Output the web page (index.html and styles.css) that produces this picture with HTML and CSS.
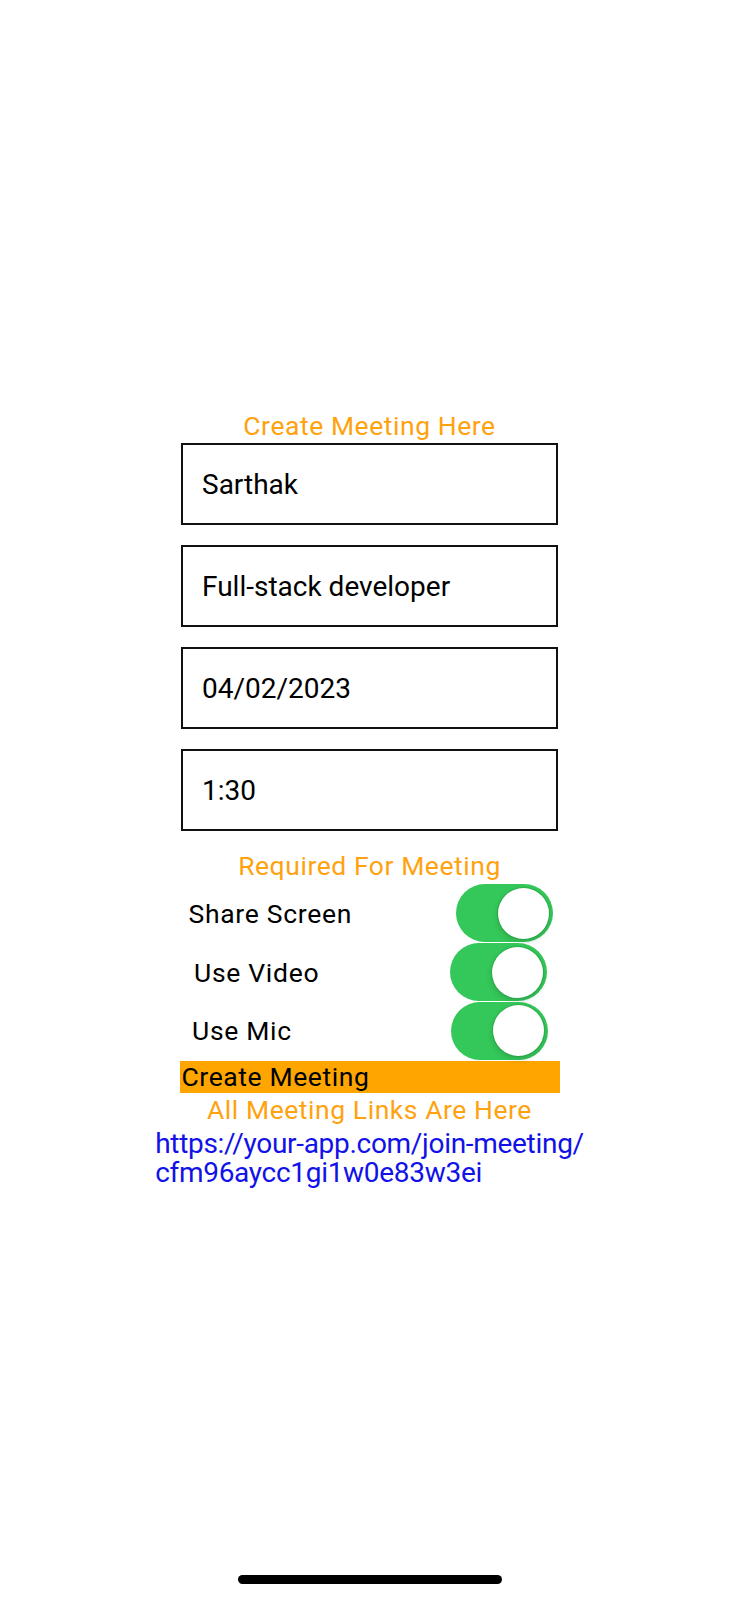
FILE: index.html
```html
<!DOCTYPE html>
<html>
<head>
<meta charset="utf-8">
<link rel="stylesheet" href="styles.css">
</head>
<body>
<div class="screen">
  <div class="content">
    <div class="heading title">Create Meeting Here</div>
    <div class="fields">
      <div class="field">Sarthak</div>
      <div class="field">Full-stack developer</div>
      <div class="field">04/02/2023</div>
      <div class="field">1:30</div>
    </div>
    <div class="heading required">Required For Meeting</div>
    <div class="switches">
      <div class="switch-row row-share">
        <span class="label">Share Screen</span>
        <span class="toggle"><span class="knob"></span></span>
      </div>
      <div class="switch-row row-video">
        <span class="label">Use Video</span>
        <span class="toggle"><span class="knob"></span></span>
      </div>
      <div class="switch-row row-mic">
        <span class="label">Use Mic</span>
        <span class="toggle"><span class="knob"></span></span>
      </div>
    </div>
    <div class="create-btn">Create Meeting</div>
    <div class="heading links-title">All Meeting Links Are Here</div>
    <div class="link">https://your-app.com/join-meeting/<br>cfm96aycc1gi1w0e83w3ei</div>
  </div>
  <div class="home-indicator"></div>
</div>
</body>
</html>
```
FILE: styles.css
```css
* { box-sizing: border-box; }
html, body { margin: 0; padding: 0; background: #fff; }
body { font-family: Roboto, "Noto Sans", sans-serif; }
.screen {
  position: relative;
  width: 739px;
  height: 1600px;
  overflow: hidden;
  background: #fff;
}
.content {
  display: flex;
  flex-direction: column;
  align-items: center;
  padding-top: 408px;
}
.heading {
  color: #FFA20F;
  font-size: 26.5px;
  letter-spacing: 0.55px;
  line-height: 35px;
  height: 35px;
  text-align: center;
}
.fields {
  display: flex;
  flex-direction: column;
  gap: 20px;
  width: 377px;
}
.field {
  height: 82px;
  border: 2px solid #111;
  display: flex;
  align-items: center;
  padding-left: 19px;
  font-size: 28px;
  color: #000;
}
.required {
  margin-top: 20px;
  line-height: 30px;
  height: 30px;
  margin-bottom: 3px;
}
.switches {
  display: flex;
  flex-direction: column;
  align-items: center;
}
.switch-row {
  height: 58.7px;
  display: flex;
  align-items: center;
  justify-content: space-between;
}
.row-share { width: 364px; margin-left: 2px; }
.row-video { width: 353px; margin-left: 2px; }
.row-mic { width: 356px; margin-left: 1px; }
.label {
  font-size: 26.5px;
  letter-spacing: 0.7px;
  color: #000;
}
.toggle {
  position: relative;
  width: 97px;
  height: 58px;
  border-radius: 29px;
  background: #34C759;
  display: flex;
  align-items: center;
  justify-content: flex-end;
  padding-right: 4px;
}
.knob {
  width: 51px;
  height: 51px;
  border-radius: 50%;
  background: #fff;
  box-shadow: 0 0 0 1px rgba(30,140,60,0.35), 0 3px 6px rgba(0,0,0,0.15);
}
.create-btn {
  width: 380px;
  height: 32px;
  line-height: 32px;
  background: #FFA500;
  color: #000;
  font-size: 26.5px;
  letter-spacing: 0.6px;
  padding-left: 2px;
  margin-top: 1px;
}
.links-title {
  margin-top: 2px;
  line-height: 30px;
  height: 30px;
}
.link {
  margin-top: 5px;
  color: #1111E8;
  font-size: 28px;
  letter-spacing: -0.3px;
  line-height: 28.5px;
  text-align: left;
}
.home-indicator {
  position: absolute;
  left: 238px;
  top: 1575px;
  width: 264px;
  height: 9px;
  border-radius: 5px;
  background: #000;
}
```
